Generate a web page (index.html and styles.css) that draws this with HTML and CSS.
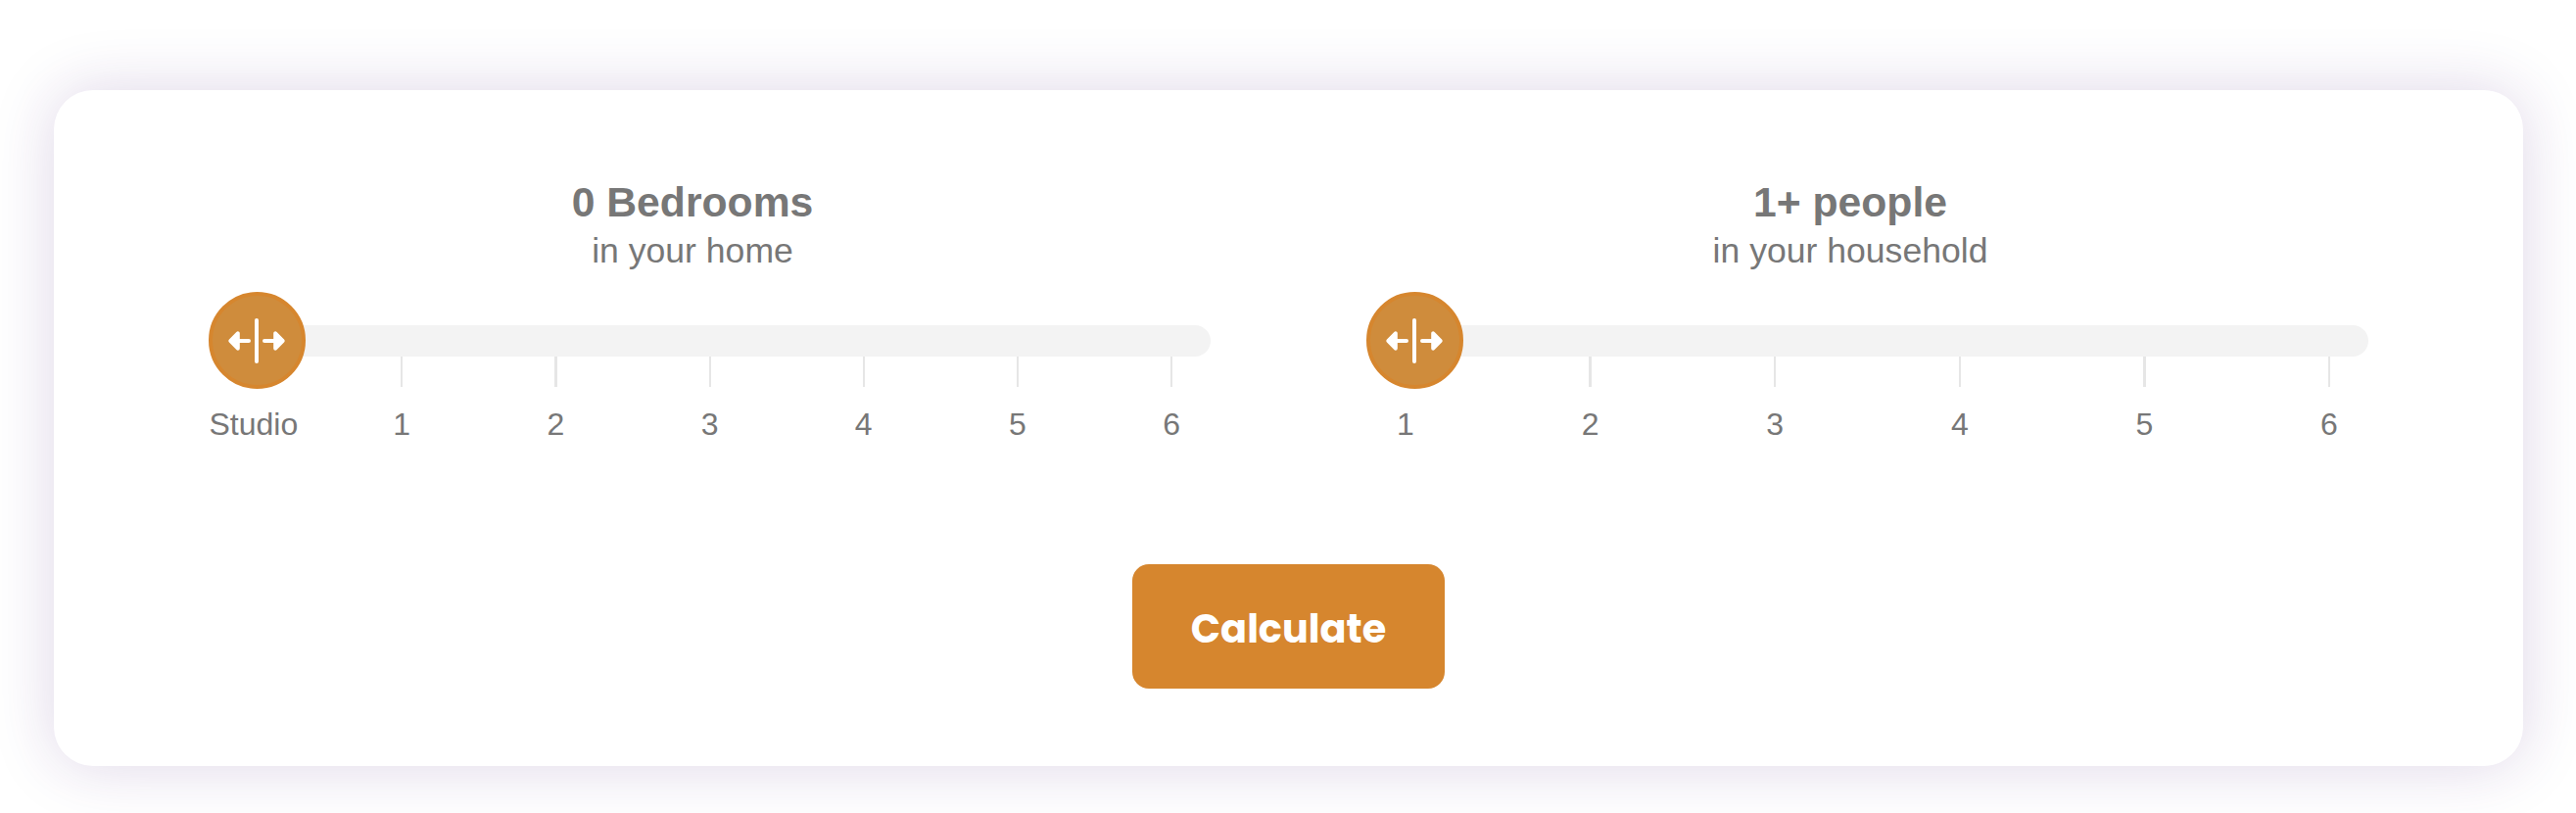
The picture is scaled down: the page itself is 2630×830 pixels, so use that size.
FILE: index.html
```html
<!DOCTYPE html>
<html lang="en">
<head>
<meta charset="utf-8">
<title>Calculator</title>
<link rel="stylesheet" href="styles.css">
</head>
<body>
<main class="card">
  <div class="sliders">
    <section class="slider slider-bedrooms">
      <div class="heading">
        <h2 class="value">0 Bedrooms</h2>
        <p class="caption">in your home</p>
      </div>
      <div class="track">
        <div class="thumb">
          <svg class="thumb-icon" viewBox="0 0 58 46"><use href="#drag"/></svg>
        </div>
      </div>
      <div class="scale">
        <span class="first">Studio</span>
        <span class="mark">1</span><span class="mark wide">2</span><span class="mark">3</span><span class="mark">4</span><span class="mark">5</span><span class="mark">6</span>
      </div>
    </section>
    <section class="slider slider-people">
      <div class="heading">
        <h2 class="value">1+ people</h2>
        <p class="caption">in your household</p>
      </div>
      <div class="track">
        <div class="thumb">
          <svg class="thumb-icon" viewBox="0 0 58 46"><use href="#drag"/></svg>
        </div>
      </div>
      <div class="scale">
        <span class="first">1</span>
        <span class="mark wide">2</span><span class="mark">3</span><span class="mark">4</span><span class="mark wide">5</span><span class="mark">6</span>
      </div>
    </section>
  </div>
  <button class="calculate" type="button">Calculate</button>
</main>
<svg width="0" height="0" class="defs">
  <symbol id="drag" viewBox="0 0 58 46">
    <path d="M29 2V44M10 23H21M48 23H37"/>
    <path d="M2.400 23L9.800 15.300V30.700ZM55.600 23L48.200 15.300V30.700Z"/>
  </symbol>
</svg>
</body>
</html>
```
FILE: styles.css
```css
* { box-sizing: border-box; }
body {
  margin: 0;
  padding: 92px 54px 48px 55px;
  height: 830px;
  overflow: hidden;
  background: #fff;
  color: #777;
  font-family: Arial, "Liberation Sans", sans-serif;
}
.defs { display: none; }
.card {
  display: flex;
  flex-direction: column;
  align-items: center;
  height: 690px;
  padding-top: 90px;
  border-radius: 40px;
  background: #fff;
  box-shadow: 0 0 64px rgba(70, 28, 121, .18);
}
.sliders {
  display: flex;
  gap: 159px;
  width: 2205px;
  height: 394px;
}
.slider { width: 1023px; }
.heading {
  width: 988px;
  height: 150px;
  text-align: center;
}
.value {
  margin: 0;
  font-size: 42.7px;
  line-height: 48px;
  font-weight: 700;
}
.caption {
  margin: 0;
  padding-top: 5px;
  font-size: 35.6px;
  line-height: 42px;
}
.track {
  display: flex;
  align-items: center;
  height: 32px;
  border-radius: 16px;
  background: #f3f3f3;
}
.thumb {
  display: flex;
  flex: none;
  align-items: center;
  justify-content: center;
  width: 99px;
  height: 99px;
  margin-top: -1px;
  border: 4px solid #d6862e;
  border-radius: 50%;
  background: #cf8c3c;
}
.thumb-icon {
  width: 58px;
  height: 46px;
  margin-right: 1px;
  margin-top: 1px;
  fill: #fff;
  stroke: #fff;
  stroke-width: 4px;
  stroke-linecap: round;
  stroke-linejoin: round;
}
.scale {
  display: flex;
  font-size: 32px;
  line-height: 36px;
}
.first {
  flex: none;
  padding-top: 51px;
}
.mark {
  display: flex;
  flex: none;
  flex-direction: column;
  align-items: center;
  gap: 20px;
}
.mark::before {
  content: "";
  width: 2px;
  height: 31px;
  background: #e6e6e6;
}
.wide::before { width: 3px; }
.slider-bedrooms .first {
  width: 118.6px;
  padding-left: 0.5px;
}
.slider-bedrooms .mark { width: 157.200px; }
.slider-people .first {
  width: 134.300px;
  padding-left: 31px;
}
.slider-people .mark { width: 188.600px; }
.calculate {
  width: 319px;
  height: 127px;
  padding: 5px 0 0;
  border: 0;
  border-radius: 17px;
  background: #d6862e;
  color: #fff;
  font-family: Poppins, Inter, sans-serif;
  font-size: 39.8px;
  font-weight: 700;
}
```
